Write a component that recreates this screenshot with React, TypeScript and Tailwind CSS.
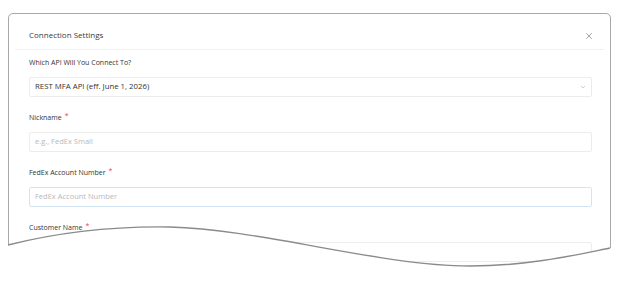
import React from "react";

function Label({ text, required }: { text: string; required?: boolean }) {
  return (
    <div className="mb-[9px] flex h-[10px] items-center text-[7px] leading-[10px] text-[#333]">
      <span>{text}</span>
      {required && (
        <span className="relative -top-[3px] ml-[3px] text-[7px] leading-none text-[#e5484d]">*</span>
      )}
    </div>
  );
}

export default function App() {
  return (
    <div
      className="relative h-[281px] w-[620px] overflow-hidden bg-white"
      style={{ fontFamily: '"Open Sans", "Noto Sans", sans-serif' }}
    >
      <div className="ml-[8px] mt-[13px] h-[262px] w-[603px] overflow-hidden rounded-[5px] border border-[#a8a8a8] bg-white">
        <div className="flex items-start justify-between pl-[20px] pr-[17px] pt-[15px] pb-[8px]">
          <span className="text-[8px] leading-[12px] text-[#3a3a3a]">Connection Settings</span>
          <svg width="8" height="8" viewBox="0 0 8 8" className="mt-[3px]">
            <path d="M1.5 1.5 L6.5 6.5 M6.5 1.5 L1.5 6.5" stroke="#9a9a9a" strokeWidth="0.9" strokeLinecap="round" />
          </svg>
        </div>
        <div className="mx-[6px] h-px bg-[#f1f1f1]" />
        <div className="pl-[20px] pr-[18px] pt-[8px]">
          <div className="mb-[16px]">
            <Label text="Which API Will You Connect To?" />
            <div className="flex h-[20px] items-center justify-between rounded-[2px] border border-[#ececec] pl-[5px] pr-[5px] text-[7.8px] text-[#333]">
              <span>REST MFA API (eff. June 1, 2026)</span>
              <svg width="6" height="4" viewBox="0 0 6 4">
                <path d="M1 1 L3 3 L5 1" fill="none" stroke="#c4c4c4" strokeWidth="0.8" />
              </svg>
            </div>
          </div>
          <div className="mb-[16px]">
            <Label text="Nickname" required />
            <div className="flex h-[20px] items-center rounded-[2px] border border-[#ececec] pl-[5px] text-[7.5px] text-[#b8b8b8]">
              e.g., FedEx Small
            </div>
          </div>
          <div className="mb-[16px]">
            <Label text="FedEx Account Number" required />
            <div className="flex h-[20px] items-center rounded-[2px] border border-[#d3e5f4] pl-[5px] text-[7.5px] text-[#b8b8b8]">
              FedEx Account Number
            </div>
          </div>
          <div className="mb-[16px]">
            <Label text="Customer Name" required />
            <div className="flex h-[20px] items-center rounded-[2px] border border-[#ececec] pl-[5px] text-[7.5px] text-[#b8b8b8]" />
          </div>
        </div>
      </div>
      <svg className="absolute left-0 top-0" width="620" height="281" viewBox="0 0 620 281">
        <path
          d="M0 245 L8 245 C 60 232, 110 226, 170 227 C 260 229, 380 266, 470 266 C 530 266, 580 254, 610 248 L620 248 L620 281 L0 281 Z"
          fill="#ffffff"
        />
        <path
          d="M8 245 C 60 232, 110 226, 170 227 C 260 229, 380 266, 470 266 C 530 266, 580 254, 610 248"
          fill="none"
          stroke="#8a8a8a"
          strokeWidth="1.4"
        />
      </svg>
    </div>
  );
}
